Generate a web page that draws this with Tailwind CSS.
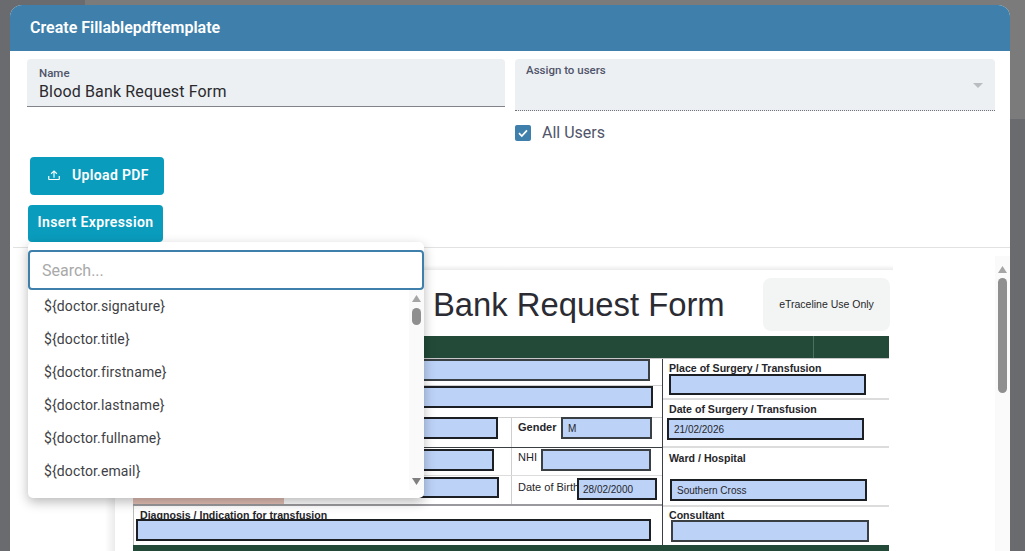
<!DOCTYPE html>
<html lang="en">
<head>
  <meta charset="UTF-8">
  <title>Create Fillablepdftemplate</title>
  <script src="https://cdn.jsdelivr.net/npm/@tailwindcss/browser@4"></script>
</head>
<body class="relative w-[1025px] h-[551px] overflow-hidden bg-[#6a6b6f] font-['Roboto',sans-serif]">
  <!-- Page behind the overlay -->
  <div class="absolute left-[85px] top-0 right-0 h-[119px] bg-[#7b7b7b]"></div>

  <!-- Dialog -->
  <div class="relative mt-[5px] ml-[10px] w-[1000px] h-[546px] flex flex-col bg-white rounded-t-[12px]">
    <header class="h-[46px] shrink-0 flex items-center pl-[20px] bg-[#3e80ab] rounded-t-[12px]">
      <h1 class="text-[16px] font-semibold text-white">Create Fillablepdftemplate</h1>
    </header>

    <!-- Fields -->
    <div class="h-[106px] shrink-0 flex gap-[10px] pl-[17px] pt-[8px]">
      <div class="w-[478px] h-[48px] pl-[12px] pt-[8px] bg-[#ecf0f3] rounded-t-[4px] border-b border-[#80838a]">
        <div class="text-[11.5px] leading-[13px] font-medium text-[#50546a]">Name</div>
        <div class="mt-px text-[16px] leading-[22px] tracking-[0.15px] text-[#2a2a2e]">Blood Bank Request Form</div>
      </div>
      <div class="w-[480px]">
        <div class="relative h-[52px] pl-[11px] pt-[5px] bg-[#ecf0f3] rounded-t-[4px] border-b border-dotted border-[#70737a]">
          <div class="text-[11.5px] leading-[13px] font-medium text-[#50546a]">Assign to users</div>
          <svg class="absolute right-[12px] top-[24px] w-[10px] h-[5px]" viewBox="0 0 10 5"><path d="M0 0h10L5 5z" fill="#b9bcc0"/></svg>
        </div>
        <label class="mt-[13px] flex items-center gap-[11px]">
          <span class="w-[16px] h-[16px] flex items-center justify-center rounded-[2px] bg-[#3e80ab]">
            <svg class="w-[12px] h-[12px]" viewBox="0 0 12 12"><path d="M2 6.2l2.8 2.8L10 3.4" fill="none" stroke="#fff" stroke-width="1.7"/></svg>
          </span>
          <span class="text-[16px] leading-[18px] text-[#50546a]">All Users</span>
        </label>
      </div>
    </div>

    <!-- Buttons -->
    <button class="shrink-0 ml-[20px] w-[134px] h-[38px] flex items-center pl-[17px] pb-[1px] gap-[11px] rounded-[4px] bg-[#0a9cbd] text-white text-[14px] font-semibold">
      <svg class="w-[14px] h-[14px]" viewBox="0 0 24 24" fill="#fff"><path d="M2 12H4V17H20V12H22V17C22 18.11 21.11 19 20 19H4C2.9 19 2 18.1 2 17V12M12 2L6.46 7.46L7.88 8.88L11 5.75V15H13V5.75L16.13 8.88L17.55 7.45L12 2Z"/></svg>
      <span class="tracking-[0.35px]">Upload PDF</span>
    </button>
    <button class="shrink-0 mt-[10px] ml-[18px] w-[135px] h-[37px] pb-[2px] rounded-[4px] bg-[#0a9cbd] text-white text-[14px] font-semibold tracking-[0.4px] text-center">Insert Expression</button>
    <div class="shrink-0 mt-[5px] ml-[3px] h-px bg-[#e2e2e2]"></div>

    <!-- PDF preview, fields sit on the page as a free canvas -->
    <div class="relative flex-1 overflow-hidden">
      <div class="absolute left-[105px] top-[17px] w-[778px] h-[5px] bg-linear-to-b from-white to-[#ececec]"></div>
      <div class="absolute left-[95px] top-[22px] w-[10px] h-[300px] bg-linear-to-r from-white to-[#ececec]"></div>

      <div class="absolute left-[105px] top-[22px] w-[780px] h-[300px] bg-white text-[#26262a] font-['Liberation_Sans',sans-serif]">
        <div class="absolute left-[225px] top-[15px] text-[32.8px] leading-[40px] whitespace-nowrap text-[#2b2b33]">Blood Bank Request Form</div>
        <div class="absolute left-[648px] top-[8px] w-[127px] h-[53px] flex items-center justify-center rounded-[8px] bg-[#f3f5f4] text-[10.5px]">eTraceline Use Only</div>

        <div class="absolute left-[18px] top-[66px] w-[756px] h-[22px] bg-[#234a39]"></div>
        <div class="absolute left-[698px] top-[66px] w-px h-[22px] bg-[#4d6f60]"></div>
        <div class="absolute left-[18px] top-[275px] w-[756px] h-[10px] bg-[#234a39]"></div>

        <!-- Table lines -->
        <div class="absolute left-[547px] top-[88px] w-px h-[187px] bg-[#3a3f44]"></div>
        <div class="absolute left-[396px] top-[147px] w-px h-[88px] bg-[#cfcfcf]"></div>
        <div class="absolute left-[18px] top-[115px] w-[529px] h-px bg-[#cfcfcf]"></div>
        <div class="absolute left-[18px] top-[147px] w-[529px] h-px bg-[#cfcfcf]"></div>
        <div class="absolute left-[18px] top-[177px] w-[529px] h-px bg-[#3a3f44]"></div>
        <div class="absolute left-[18px] top-[205px] w-[529px] h-px bg-[#dcdcdc]"></div>
        <div class="absolute left-[18px] top-[220px] w-[151px] h-[14px] bg-[#e3bfb5]"></div>
        <div class="absolute left-[18px] top-[234px] w-[529px] h-[2px] bg-[#9a9a9e]"></div>
        <div class="absolute left-[548px] top-[128px] w-[226px] h-[2px] bg-[#dcdcdc]"></div>
        <div class="absolute left-[548px] top-[176px] w-[226px] h-[2px] bg-[#dcdcdc]"></div>
        <div class="absolute left-[548px] top-[235px] w-[226px] h-[2px] bg-[#dcdcdc]"></div>
        <div class="absolute left-[18px] top-[88px] w-[756px] h-px bg-[#c8c8c8]"></div>
        <div class="absolute left-[18px] top-[236px] w-px h-[39px] bg-[#bbbbbb]"></div>

        <!-- Labels -->
        <div class="absolute left-[403px] top-[150px] text-[11px] leading-[14px] font-bold">Gender</div>
        <div class="absolute left-[403px] top-[180px] text-[11px] leading-[14px]">NHI</div>
        <div class="absolute left-[403px] top-[210px] text-[11px] leading-[14px]">Date of Birth</div>
        <div class="absolute left-[25px] top-[238px] text-[10.6px] leading-[14px] font-bold">Diagnosis / Indication for transfusion</div>
        <div class="absolute left-[554px] top-[91px] text-[10.6px] leading-[14px] font-bold">Place of Surgery / Transfusion</div>
        <div class="absolute left-[554px] top-[132px] text-[10.6px] leading-[14px] font-bold">Date of Surgery / Transfusion</div>
        <div class="absolute left-[554px] top-[181px] text-[10.6px] leading-[14px] font-bold">Ward / Hospital</div>
        <div class="absolute left-[554px] top-[238px] text-[10.6px] leading-[14px] font-bold">Consultant</div>

        <!-- Form fields -->
        <div class="absolute left-[185px] top-[89px] w-[350px] h-[22px] bg-[#bcd2f7] border-2 border-[#3a3f44]"></div>
        <div class="absolute left-[185px] top-[116px] w-[353px] h-[22px] bg-[#bcd2f7] border-2 border-[#1c1f24]"></div>
        <div class="absolute left-[185px] top-[147px] w-[198px] h-[22px] bg-[#bcd2f7] border-2 border-[#1c1f24]"></div>
        <div class="absolute left-[185px] top-[179px] w-[194px] h-[22px] bg-[#bcd2f7] border-2 border-[#1c1f24]"></div>
        <div class="absolute left-[185px] top-[207px] w-[199px] h-[21px] bg-[#bcd2f7] border-2 border-[#1c1f24]"></div>
        <div class="absolute left-[446px] top-[147px] w-[91px] h-[22px] pl-[5px] flex items-center text-[10px] bg-[#bcd2f7] border-2 border-[#3a3f44]">M</div>
        <div class="absolute left-[426px] top-[179px] w-[110px] h-[22px] bg-[#bcd2f7] border-2 border-[#3a3f44]"></div>
        <div class="absolute left-[462px] top-[208px] w-[80px] h-[22px] pl-[4px] flex items-center text-[10px] bg-[#bcd2f7] border-2 border-[#1c1f24]">28/02/2000</div>
        <div class="absolute left-[21px] top-[249px] w-[515px] h-[22px] bg-[#bcd2f7] border-2 border-[#1c1f24]"></div>
        <div class="absolute left-[554px] top-[104px] w-[197px] h-[21px] bg-[#bcd2f7] border-2 border-[#1c1f24]"></div>
        <div class="absolute left-[552px] top-[148px] w-[197px] h-[22px] pl-[5px] flex items-center text-[10px] bg-[#bcd2f7] border-2 border-[#1c1f24]">21/02/2026</div>
        <div class="absolute left-[555px] top-[209px] w-[197px] h-[22px] pl-[5px] flex items-center text-[10px] bg-[#bcd2f7] border-2 border-[#1c1f24]">Southern Cross</div>
        <div class="absolute left-[556px] top-[250px] w-[198px] h-[22px] bg-[#bcd2f7] border-2 border-[#3a3f44]"></div>
      </div>

      <!-- Preview scrollbar -->
      <div class="absolute right-0 top-[8px] bottom-0 w-[15px] bg-[#fafafa]">
        <svg class="absolute left-[3px] top-[10px] w-[9px] h-[7px]" viewBox="0 0 9 7"><path d="M4.5 0L9 7H0z" fill="#a5a5a5"/></svg>
        <div class="absolute left-[3px] top-[22px] w-[9px] h-[115px] rounded-[5px] bg-[#8f8f8f]"></div>
      </div>
    </div>
  </div>

  <!-- Expression dropdown -->
  <div class="absolute left-[28px] top-[242px] w-[396px] h-[256px] bg-white rounded-[5px] shadow-[0_4px_12px_rgba(0,0,0,0.28)]">
    <input class="block mt-[8px] w-[396px] h-[40px] pl-[12px] rounded-[4px] border-2 border-[#3e80ab] outline-none text-[16px] placeholder:text-[#a9a9a9]" placeholder="Search...">
    <ul class="text-[14px] leading-[33px] pl-[16px] tracking-[0.12px] text-[#3f3f46]">
      <li>${doctor.signature}</li>
      <li>${doctor.title}</li>
      <li>${doctor.firstname}</li>
      <li>${doctor.lastname}</li>
      <li>${doctor.fullname}</li>
      <li>${doctor.email}</li>
    </ul>
    <div class="absolute right-0 top-[48px] bottom-[8px] w-[15px] bg-[#fafafa]">
      <svg class="absolute left-[3px] top-[5px] w-[9px] h-[7px]" viewBox="0 0 9 7"><path d="M4.5 0L9 7H0z" fill="#a5a5a5"/></svg>
      <div class="absolute left-[3px] top-[18px] w-[9px] h-[17px] rounded-[5px] bg-[#8f8f8f]"></div>
      <svg class="absolute left-[3px] bottom-[5px] w-[9px] h-[7px]" viewBox="0 0 9 7"><path d="M0 0h9L4.500 7z" fill="#7f7f7f"/></svg>
    </div>
  </div>
</body>
</html>
